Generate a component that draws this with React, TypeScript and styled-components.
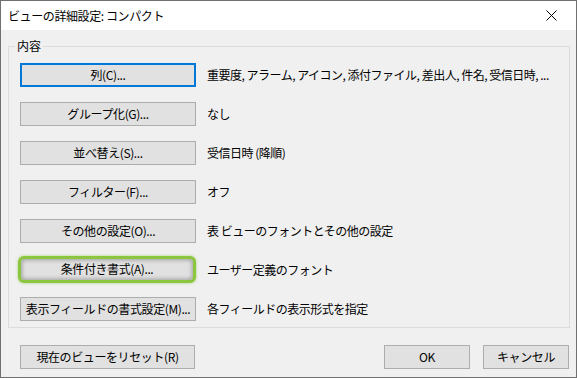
import React from 'react';
import styled, { createGlobalStyle } from 'styled-components';

const GlobalStyle = createGlobalStyle`
  html, body {
    margin: 0;
    padding: 0;
    background: #f0f0f0;
  }
  body {
    font-family: "Noto Sans CJK JP", "Liberation Sans", sans-serif;
    font-size: 12px;
    color: #000;
  }
`;

const Window = styled.div`
  box-sizing: border-box;
  width: 577px;
  height: 378px;
  border: 1px solid #707070;
  background: #f0f0f0;
  display: flex;
  flex-direction: column;
`;

const TitleBar = styled.div`
  height: 29px;
  background: #fff;
  display: flex;
  align-items: center;
  justify-content: space-between;
  padding: 0 0 0 7px;
  flex-shrink: 0;
`;

const Title = styled.div`
  font-size: 12px;
  letter-spacing: -0.4px;
  line-height: 16px;
`;

const CloseButton = styled.div`
  width: 46px;
  height: 29px;
  display: flex;
  align-items: center;
  justify-content: center;
  margin-right: 2px;
`;

const Body = styled.div`
  flex: 1;
  display: flex;
  flex-direction: column;
  padding: 16px 6px 0 7px;
`;

const GroupBox = styled.div`
  position: relative;
  border: 1px solid #dcdcdc;
  padding: 16px 10px 6px 11px;
`;

const GroupLabel = styled.span`
  position: absolute;
  top: -10px;
  left: 6px;
  padding: 0 2px;
  background: #f0f0f0;
  line-height: 18px;
`;

const Rows = styled.div`
  display: grid;
  grid-template-columns: 176px 1fr;
  grid-auto-rows: 24px;
  row-gap: 15px;
  column-gap: 11px;
  align-items: center;
`;

const Desc = styled.div`
  white-space: nowrap;
  letter-spacing: -0.5px;
  line-height: 16px;
`;

const Button = styled.button<{ $focused?: boolean; $highlighted?: boolean; $w?: number }>`
  box-sizing: border-box;
  width: ${p => (p.$w ? `${p.$w}px` : '100%')};
  height: ${p => (p.$highlighted ? '27px' : '24px')};
  margin: ${p => (p.$highlighted ? '-2px 0 0 -2px' : '0')};
  padding: 0;
  font-family: inherit;
  font-size: 12px;
  letter-spacing: -0.4px;
  color: #000;
  background: #e1e1e1;
  border: ${p => (p.$focused ? '2px solid #0078d7' : p.$highlighted ? '3px solid #8cc63e' : '1px solid #adadad')};
  border-radius: ${p => (p.$highlighted ? '6px' : '0')};
  box-shadow: ${p =>
    p.$highlighted ? 'inset 0 0 4px 1px rgba(0, 0, 0, 0.3), 0 0 3px rgba(140, 198, 62, 0.7)' : 'none'};
  line-height: 16px;
`;

const Footer = styled.div`
  display: flex;
  align-items: center;
  padding: 17px 1px 0 12px;
`;

const FooterSpacer = styled.div`
  flex: 1;
`;

const FooterGap = styled.div`
  width: 13px;
`;

const rows: { label: string; desc: string; focused?: boolean; highlighted?: boolean }[] = [
  { label: '列(C)...', desc: '重要度, アラーム, アイコン, 添付ファイル, 差出人, 件名, 受信日時, ...', focused: true },
  { label: 'グループ化(G)...', desc: 'なし' },
  { label: '並べ替え(S)...', desc: '受信日時 (降順)' },
  { label: 'フィルター(F)...', desc: 'オフ' },
  { label: 'その他の設定(O)...', desc: '表 ビューのフォントとその他の設定' },
  { label: '条件付き書式(A)...', desc: 'ユーザー定義のフォント', highlighted: true },
  { label: '表示フィールドの書式設定(M)...', desc: '各フィールドの表示形式を指定' }
];

const App: React.FC = () => {
  return (
    <>
      <GlobalStyle />
      <Window>
        <TitleBar>
          <Title>ビューの詳細設定: コンパクト</Title>
          <CloseButton>
            <svg width="11" height="11" viewBox="0 0 11 11">
              <path d="M0.5 0.5 L10.5 10.5 M10.5 0.5 L0.5 10.5" stroke="#000" strokeWidth="1" fill="none" />
            </svg>
          </CloseButton>
        </TitleBar>
        <Body>
          <GroupBox>
            <GroupLabel>内容</GroupLabel>
            <Rows>
              {rows.map(r => (
                <React.Fragment key={r.label}>
                  <Button $focused={r.focused} $highlighted={r.highlighted} $w={r.highlighted ? 178 : undefined}>
                    {r.label}
                  </Button>
                  <Desc>{r.desc}</Desc>
                </React.Fragment>
              ))}
            </Rows>
          </GroupBox>
          <Footer>
            <Button $w={175}>現在のビューをリセット(R)</Button>
            <FooterSpacer />
            <Button $w={86}>OK</Button>
            <FooterGap />
            <Button $w={86}>キャンセル</Button>
          </Footer>
        </Body>
      </Window>
    </>
  );
};

export default App;
